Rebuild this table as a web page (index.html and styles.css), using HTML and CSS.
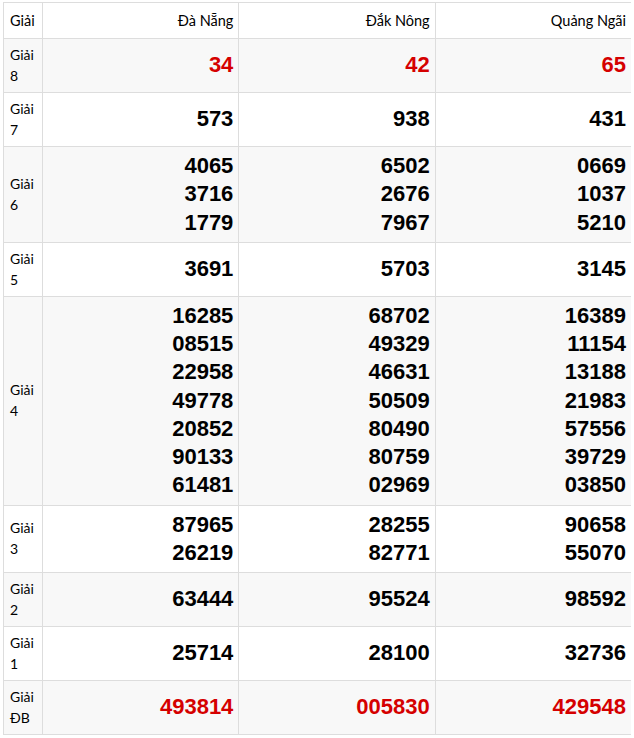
FILE: index.html
```html
<!DOCTYPE html>
<html lang="vi">
<head>
<meta charset="utf-8">
<link rel="stylesheet" href="styles.css">
<title>Kết quả xổ số</title>
</head>
<body>
<table class="kq">
  <colgroup>
    <col class="c-label">
    <col class="c-prov">
    <col class="c-prov">
    <col class="c-prov">
  </colgroup>
  <thead>
    <tr>
      <th class="h-label">Giải</th>
      <th class="h-prov">Đà Nẵng</th>
      <th class="h-prov">Đắk Nông</th>
      <th class="h-prov">Quảng Ngãi</th>
    </tr>
  </thead>
  <tbody>
    <tr class="alt">
      <td class="lbl">Giải 8</td>
      <td class="num red"><div>34</div></td>
      <td class="num red"><div>42</div></td>
      <td class="num red"><div>65</div></td>
    </tr>
    <tr>
      <td class="lbl">Giải 7</td>
      <td class="num"><div>573</div></td>
      <td class="num"><div>938</div></td>
      <td class="num"><div>431</div></td>
    </tr>
    <tr class="alt">
      <td class="lbl">Giải 6</td>
      <td class="num"><div>4065</div><div>3716</div><div>1779</div></td>
      <td class="num"><div>6502</div><div>2676</div><div>7967</div></td>
      <td class="num"><div>0669</div><div>1037</div><div>5210</div></td>
    </tr>
    <tr>
      <td class="lbl">Giải 5</td>
      <td class="num"><div>3691</div></td>
      <td class="num"><div>5703</div></td>
      <td class="num"><div>3145</div></td>
    </tr>
    <tr class="alt">
      <td class="lbl">Giải 4</td>
      <td class="num"><div>16285</div><div>08515</div><div>22958</div><div>49778</div><div>20852</div><div>90133</div><div>61481</div></td>
      <td class="num"><div>68702</div><div>49329</div><div>46631</div><div>50509</div><div>80490</div><div>80759</div><div>02969</div></td>
      <td class="num"><div>16389</div><div>11154</div><div>13188</div><div>21983</div><div>57556</div><div>39729</div><div>03850</div></td>
    </tr>
    <tr>
      <td class="lbl">Giải 3</td>
      <td class="num"><div>87965</div><div>26219</div></td>
      <td class="num"><div>28255</div><div>82771</div></td>
      <td class="num"><div>90658</div><div>55070</div></td>
    </tr>
    <tr class="alt">
      <td class="lbl">Giải 2</td>
      <td class="num"><div>63444</div></td>
      <td class="num"><div>95524</div></td>
      <td class="num"><div>98592</div></td>
    </tr>
    <tr>
      <td class="lbl">Giải 1</td>
      <td class="num"><div>25714</div></td>
      <td class="num"><div>28100</div></td>
      <td class="num"><div>32736</div></td>
    </tr>
    <tr class="alt">
      <td class="lbl">Giải ĐB</td>
      <td class="num red"><div>493814</div></td>
      <td class="num red"><div>005830</div></td>
      <td class="num red"><div>429548</div></td>
    </tr>
  </tbody>
</table>
</body>
</html>
```

FILE: styles.css
```css
html, body {
  background: #ffffff;
}
body {
  margin: 2px 3px;
  font-family: Lato, "Noto Sans", "DejaVu Sans", sans-serif;
  color: #000;
}
.kq {
  width: 629px;
  table-layout: fixed;
  border-collapse: collapse;
}
.c-label { width: 39px; }
.c-prov { width: 196px; }
.kq th, .kq td {
  border: 1px solid #dddddd;
}
.kq th {
  font-weight: normal;
  font-size: 14.5px;
  line-height: 21px;
  padding: 7px 5px 7px 6px;
}
.h-label {
  text-align: left;
  font-size: 14px;
}
.h-prov { text-align: right; }
.lbl {
  font-size: 14px;
  line-height: 21px;
  padding: 5px 6px 6px;
  text-align: left;
  vertical-align: middle;
}
.num {
  font-family: "Liberation Sans", Arial, sans-serif;
  font-weight: bold;
  font-size: 22px;
  line-height: 28.25px;
  padding: 5px 5px 5px 6px;
  text-align: right;
  vertical-align: middle;
}
.red { color: #d50000; }
.alt td { background: #f8f8f8; }
```
